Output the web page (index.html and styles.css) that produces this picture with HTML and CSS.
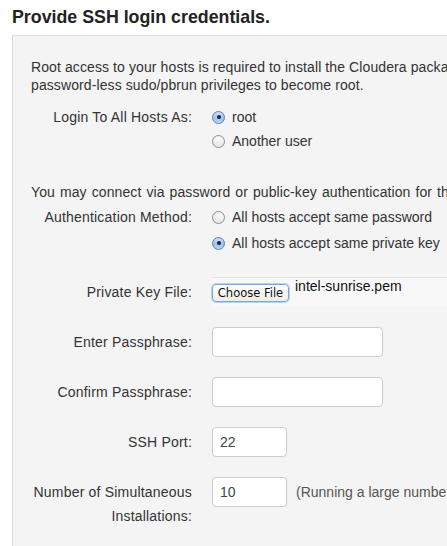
FILE: index.html
```html
<!DOCTYPE html>
<html>
<head>
<meta charset="utf-8">
<link rel="stylesheet" href="styles.css">
</head>
<body>
<h2 class="title">Provide SSH login credentials.</h2>
<div class="panel">
  <p class="intro">Root access to your hosts is required to install the Cloudera packages. This installer will connect to your hosts via SSH and log in either directly as root or as another user with<br>password-less sudo/pbrun privileges to become root.</p>

  <div class="row radio-row login-row">
    <div class="label">Login To All Hosts As:</div>
    <div class="options">
      <div class="option"><span class="radio checked"></span><span>root</span></div>
      <div class="option"><span class="radio"></span><span>Another user</span></div>
    </div>
  </div>

  <p class="intro auth-intro">You may connect via password or public-key authentication for the user selected above.</p>

  <div class="row radio-row auth-row">
    <div class="label">Authentication Method:</div>
    <div class="options">
      <div class="option"><span class="radio"></span><span>All hosts accept same password</span></div>
      <div class="option"><span class="radio checked"></span><span>All hosts accept same private key</span></div>
    </div>
  </div>

  <div class="row field-row file-row">
    <div class="label">Private Key File:</div>
    <div class="filebox">
      <span class="filebtn">Choose File</span>
      <span class="filename">intel-sunrise.pem</span>
    </div>
  </div>

  <div class="row field-row">
    <div class="label">Enter Passphrase:</div>
    <div class="input wide"></div>
  </div>

  <div class="row field-row">
    <div class="label">Confirm Passphrase:</div>
    <div class="input wide"></div>
  </div>

  <div class="row field-row">
    <div class="label">SSH Port:</div>
    <div class="input short">22</div>
  </div>

  <div class="row field-row">
    <div class="label">Number of Simultaneous Installations:</div>
    <div class="control-line">
      <div class="input short">10</div>
      <span class="hint">(Running a large number of installations at once can consume large amounts of network bandwidth and other system resources)</span>
    </div>
  </div>
</div>
</body>
</html>
```

FILE: styles.css
```css
html, body {
  margin: 0;
  padding: 0;
  background: #fff;
  overflow: hidden;
  height: 546px;
}
body {
  padding: 0 12px;
  font-family: "Liberation Sans", Arial, Helvetica, sans-serif;
  font-size: 14px;
  color: #333;
}
.title {
  margin: 7px 0 8px;
  font-size: 17.8px;
  line-height: 20px;
  font-weight: bold;
  color: #222;
  white-space: nowrap;
}
.panel {
  width: 760px;
  height: 600px;
  box-sizing: border-box;
  border: 1px solid #ddd;
  background: #f4f4f4;
  padding: 22px 0 0 18px;
}
.intro {
  margin: 0;
  line-height: 18px;
  white-space: nowrap;
  letter-spacing: 0.1px;
}
.auth-intro {
  margin-top: 30px;
  word-spacing: 1px;
}
.row {
  display: grid;
  grid-template-columns: 161px auto;
  column-gap: 20px;
  align-items: start;
}
.label {
  text-align: right;
  line-height: 24px;
  letter-spacing: 0.2px;
}
.login-row {
  margin-top: 11px;
}
.login-row .option {
  height: 24px;
}
.auth-row {
  margin-top: 3px;
}
.auth-row .label {
  padding-top: 1px;
}
.auth-row .option {
  height: 26px;
}
.options {
  display: flex;
  flex-direction: column;
}
.option {
  display: flex;
  align-items: center;
  gap: 7px;
  white-space: nowrap;
}
.radio {
  width: 11px;
  height: 11px;
  border-radius: 50%;
  border: 1px solid #8e8e8e;
  background: linear-gradient(#ffffff, #e4e4e4);
  box-shadow: inset 0 1px 1px rgba(0,0,0,0.08);
  display: inline-flex;
  align-items: center;
  justify-content: center;
  flex: none;
}
.radio.checked {
  border-color: #5b7fb4;
  background: linear-gradient(#d8e8fb, #9cc2ee 55%, #b9d6f6);
}
.radio.checked::after {
  content: "";
  width: 4px;
  height: 4px;
  border-radius: 50%;
  background: #1d2530;
}
.field-row {
  margin-top: 20px;
}
.field-row .label {
  padding-top: 3px;
}
.file-row {
  margin-top: 21px;
}
.filebox {
  height: 29px;
  width: 600px;
  border-top: 1px solid #e3e3e3;
  background: #f8f8f8;
  margin-left: -1px;
  display: flex;
  align-items: flex-start;
}
.filebtn {
  margin-top: 6px;
  margin-left: 1px;
  box-sizing: border-box;
  width: 77px;
  height: 18px;
  border: 1px solid #7aa7dd;
  border-radius: 4px;
  box-shadow: 0 0 0 1px #b8d2f0;
  background: linear-gradient(#ffffff, #ececec);
  font-family: "DejaVu Sans", "Liberation Sans", sans-serif;
  font-size: 11.5px;
  line-height: 16px;
  text-align: center;
  color: #111;
  white-space: nowrap;
}
.filename {
  margin-left: 6px;
  line-height: 16px;
  color: #111;
}
.input {
  box-sizing: border-box;
  height: 30px;
  border: 1px solid #ccc;
  border-radius: 4px;
  background: #fff;
  padding: 0 7px;
  line-height: 28px;
  color: #444;
}
.input.wide {
  width: 171px;
}
.input.short {
  width: 75px;
  flex: none;
}
.control-line {
  display: flex;
  align-items: center;
  gap: 9px;
  white-space: nowrap;
}
.hint {
  color: #555;
}
```
